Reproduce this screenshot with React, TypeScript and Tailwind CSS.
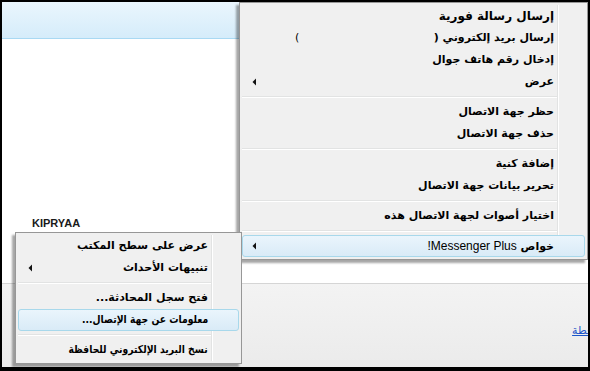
import React from "react";

type Item =
  | { kind: "sep" }
  | {
      kind: "item";
      label: React.ReactNode;
      bold?: boolean;
      arrow?: boolean;
      hl?: boolean;
      squeeze?: boolean;
      extra?: React.ReactNode;
    };

const Arrow = () => (
  <svg width="5" height="8" viewBox="0 0 5 8" className="block">
    <path d="M4 0.5 L0.5 4 L4 7.5 Z" fill="#111" />
  </svg>
);

function Menu({ items, className }: { items: Item[]; className: string }) {
  return (
    <div
      className={
        "absolute bg-[#f0f0f0] border border-[#979797] py-[2px] px-[2px] shadow-[-3px_3px_2px_rgba(0,0,0,0.35)] " +
        className
      }
    >
      <div className="relative">
        <div className="absolute top-0 bottom-0 right-[26px] w-[2px] border-l border-[#e2e3e3] bg-white" />
        {items.map((it, i) =>
          it.kind === "sep" ? (
            <div key={i} className="h-[8px] flex items-center pr-[28px]">
              <div className="w-full h-[2px] border-t border-[#e2e3e3] bg-white" />
            </div>
          ) : (
            <div
              key={i}
              className={
                "relative h-[22px] flex items-center pr-[30px] pl-[9px] rounded-[3px] " +
                (it.hl
                  ? "border border-[#a8d8eb] bg-gradient-to-b from-[#eaf5fc] to-[#d9ebf7]"
                  : "border border-transparent")
              }
            >
              <div className="w-[10px] flex items-center">{it.arrow ? <Arrow /> : null}</div>
              <div className="flex-1 flex items-center">
                {it.extra}
                <div className="flex-1" />
                <span
                  dir="rtl"
                  className={
                    "inline-block whitespace-nowrap text-[#000] " +
                    (it.bold ? "font-bold text-[12px] " : "font-semibold text-[11px] ") +
                    (it.squeeze ? "scale-x-[0.84] origin-right" : "")
                  }
                >
                  {it.label}
                </span>
              </div>
            </div>
          )
        )}
      </div>
    </div>
  );
}

export default function App() {
  const main: Item[] = [
    { kind: "item", label: "إرسال رسالة فورية", bold: true },
    {
      kind: "item",
      label: "إرسال بريد إلكتروني (",
      extra: (
        <span dir="ltr" className="ml-[33px] text-[11px] font-normal text-black">
          {"("}
        </span>
      ),
    },
    { kind: "item", label: "إدخال رقم هاتف جوال" },
    { kind: "item", label: "عرض", arrow: true },
    { kind: "sep" },
    { kind: "item", label: "حظر جهة الاتصال" },
    { kind: "item", label: "حذف جهة الاتصال" },
    { kind: "sep" },
    { kind: "item", label: "إضافة كنية" },
    { kind: "item", label: "تحرير بيانات جهة الاتصال" },
    { kind: "sep" },
    { kind: "item", label: "اختيار أصوات لجهة الاتصال هذه" },
    { kind: "sep" },
    {
      kind: "item",
      label: (
        <>
          خواص <span className="font-normal text-[12px] font-['Liberation_Sans']">Messenger Plus!</span>
        </>
      ),
      arrow: true,
      hl: true,
    },
  ];
  const sub: Item[] = [
    { kind: "item", label: "عرض على سطح المكتب" },
    { kind: "item", label: "تنبيهات الأحداث", arrow: true },
    { kind: "sep" },
    { kind: "item", label: "فتح سجل المحادثة..." },
    { kind: "item", label: "معلومات عن جهة الإتصال...", hl: true, squeeze: true },
    { kind: "sep" },
    { kind: "item", label: "نسخ البريد الإلكتروني للحافظة", squeeze: true },
  ];

  return (
    <div className="relative w-[590px] h-[371px] bg-black pt-[2px] pl-[2px] pr-[2px] pb-[4px] font-['DejaVu_Sans',sans-serif]">
      <div className="relative w-full h-full bg-white flex flex-col overflow-hidden">
        <div className="h-[37px] shrink-0 bg-gradient-to-b from-[#eaf6fd] to-[#d5ecfa] border-b border-[#a9d9f3]" />
        <div className="flex-1 bg-white relative">
          <div className="absolute left-[30px] top-[176px] text-[11px] font-bold text-[#1a1a1a] font-['Liberation_Sans',sans-serif]">
            KIPRYAA
          </div>
        </div>
        <div className="h-[84px] shrink-0 border-t border-[#d5d5d5] bg-gradient-to-b from-[#f3f3f3] to-[#ebebeb] flex justify-end pt-[39px]">
          <span className="mr-[-12px] text-[11px] text-[#1a55c9] underline">محطة</span>
        </div>
      </div>
      <Menu items={main} className="left-[239px] top-[2px] w-[349px]" />
      <Menu items={sub} className="left-[15px] top-[232px] w-[227px]" />
    </div>
  );
}
